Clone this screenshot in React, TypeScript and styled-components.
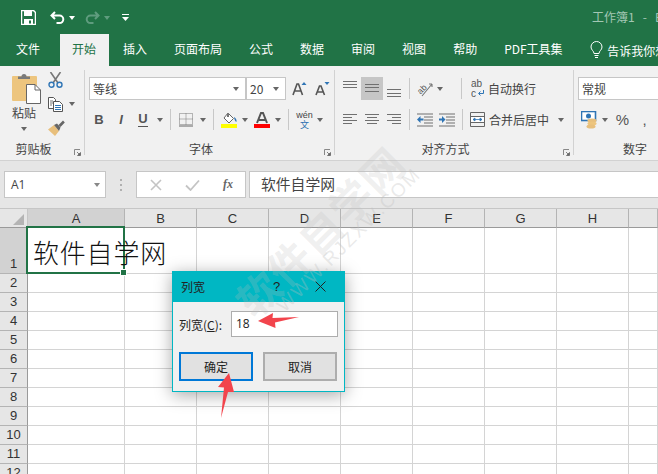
import React from "react";
import styled, { createGlobalStyle } from "styled-components";

const Global = createGlobalStyle`
  html, body { margin: 0; padding: 0; background: #fff; }
  body { font-family: "Noto Sans CJK SC", "Liberation Sans", sans-serif; font-size: 12px; color: #333; }
  * { box-sizing: border-box; }
  svg { display: block; }
`;

const Page = styled.div`
  position: relative; width: 658px; height: 474px; overflow: hidden;
  display: flex; flex-direction: column; background: #fff;
`;

/* title bar */
const TitleBar = styled.div`
  height: 33px; background: #217346; display: flex; align-items: center; flex: none;
  padding-top: 2px;
`;
const Slot = styled.div<{ $w: number; $ml?: number }>`
  width: ${p => p.$w}px; margin-left: ${p => p.$ml ?? 0}px; flex: none;
  display: flex; align-items: center; justify-content: center;
`;
const Caret = styled.i<{ $c?: string; $ml?: number }>`
  display: block; flex: none; width: 0; height: 0; margin-left: ${p => p.$ml ?? 0}px;
  border-left: 3.5px solid transparent; border-right: 3.5px solid transparent;
  border-top: 4px solid ${p => p.$c ?? "#666"};
`;
const DocTitle = styled.div`
  margin-left: 463px; color: #a3c7b4; font-size: 12px; white-space: pre; flex: none; margin-top: -2px;
`;

/* tabs */
const TabBar = styled.div`
  height: 33px; background: #217346; display: flex; flex: none; padding-left: 2.5px; padding-top: 1px;
`;
const Tab = styled.div<{ $active?: boolean }>`
  padding: 0 12.5px; margin: 0 1px; height: 32px; line-height: 30px; white-space: nowrap; font-size: 12px;
  color: ${p => (p.$active ? "#217346" : "#fff")};
  background: ${p => (p.$active ? "#f1f1f1" : "transparent")};
`;
const FileTab = styled(Tab)`
  margin-right: 6px;
`;
const TellMe = styled.div`
  margin-left: 14px; display: flex; align-items: center; gap: 4px; color: #fff; font-size: 12px;
  white-space: nowrap; height: 32px;
`;

/* ribbon */
const Ribbon = styled.div`
  height: 95px; background: #f1f1f1; border-bottom: 1px solid #d2d2d2; display: flex; flex: none; overflow: hidden;
`;
const Group = styled.div<{ $w: number }>`
  width: ${p => p.$w}px; flex: none; display: flex; flex-direction: column; position: relative;
`;
const GroupBody = styled.div`
  height: 74px; padding: 11px 0 0 4px;
`;
const GroupLabel = styled.div`
  height: 20px; padding-right: 17px; text-align: center; font-size: 12px; line-height: 18px; color: #444;
`;
const Launcher = styled.div`
  position: absolute; right: 3px; bottom: 4px; width: 7px; height: 7px;
`;
const GroupSep = styled.div`
  width: 1px; flex: none; margin: 4px 0 5px; background: #d2d2d2;
`;
const Row = styled.div`
  height: 23px; display: flex; align-items: center; & + & { margin-top: 8px; }
`;
const RowSep = styled.div<{ $ml: number }>`
  width: 1px; height: 21px; background: #c8c8c8; flex: none; margin-left: ${p => p.$ml}px;
`;
const ClipBody = styled.div`
  height: 74px; display: flex; padding-left: 12px;
`;
const PasteCol = styled.div`
  width: 24px; display: flex; flex-direction: column; align-items: flex-start; padding-top: 7px;
`;
const PasteLabel = styled.div`
  font-size: 12px; line-height: 18px; margin-top: 0; color: #444; white-space: nowrap;
`;
const PasteCaret = styled.div`
  width: 24px; display: flex; justify-content: center; margin-top: 5px;
`;
const ClipTools = styled.div`
  margin-left: 12px; padding-top: 6px; display: flex; flex-direction: column; gap: 8px;
`;
const ToolRow = styled.div`
  display: flex; align-items: center; height: 16px;
`;
const SelectBox = styled.div<{ $w: number; $ml?: number }>`
  width: ${p => p.$w}px; height: 23px; margin-left: ${p => p.$ml ?? 0}px; background: #fff; border: 1px solid #c6c6c6; flex: none;
  display: flex; align-items: center; justify-content: space-between; padding: 0 6px 0 3px;
  font-size: 12px; color: #444; white-space: nowrap;
`;
const BoldBtn = styled.span<{ $i?: boolean; $u?: boolean }>`
  font-family: "Liberation Sans", sans-serif; font-size: 13px; font-weight: 700; color: #555; line-height: 14px;
  font-style: ${p => (p.$i ? "italic" : "normal")};
  border-bottom: ${p => (p.$u ? "1px solid #555" : "none")};
`;
const AlignBtn = styled.div<{ $on?: boolean }>`
  width: 22px; height: 23px; flex: none; display: flex; justify-content: center;
  background: ${p => (p.$on ? "#c6c6c6" : "transparent")};
`;
const RowText = styled.div<{ $ml: number }>`
  margin-left: ${p => p.$ml}px; font-size: 12px; color: #444; white-space: nowrap; flex: none;
`;
const Wen = styled.div`
  display: flex; flex-direction: column; align-items: center; gap: 1px;
`;
const WenTop = styled.span`
  height: 8px; line-height: 8px; font-size: 9px; font-family: "Liberation Sans", sans-serif; color: #444;
`;
const WenBottom = styled.span`
  height: 9px; line-height: 9px; font-size: 9px; color: #2b6fb0;
`;
const Sym = styled.span<{ $s: number }>`
  font-family: "Liberation Sans", sans-serif; font-size: ${p => p.$s}px; color: #555; line-height: 1;
`;

/* formula bar */
const FormulaBar = styled.div`
  height: 48px; background: #e6e6e6; border-bottom: 1px solid #c6c6c6; flex: none; display: flex; align-items: center;
  padding: 0 0 0 4px;
`;
const NameBox = styled.div`
  width: 102px; height: 27px; background: #fff; border: 1px solid #c6c6c6; display: flex; align-items: center;
  justify-content: space-between; padding: 0 5px 0 6px; font-family: "Open Sans", sans-serif; font-size: 12px; color: #444;
`;
const Dots = styled.div`
  margin-left: 14px; width: 2px; display: flex; flex-direction: column; gap: 3px; flex: none;
  & i { display: block; width: 2px; height: 2px; background: #b0b0b0; }
`;
const FxBox = styled.div`
  margin-left: 14px; width: 110px; height: 27px; background: #fff; border: 1px solid #c6c6c6; flex: none;
  display: flex; align-items: center; padding-left: 13px; gap: 23px;
`;
const Fx = styled.span`
  font-family: "Liberation Serif", serif; font-style: italic; font-weight: 700; font-size: 12px; color: #666;
`;
const FormulaInput = styled.div`
  margin-left: 3px; flex: 1; height: 27px; background: #fff; border: 1px solid #c6c6c6; border-right: none;
  padding-left: 11px; font-size: 14.8px; line-height: 24px; color: #444; white-space: nowrap;
`;

/* sheet */
const Sheet = styled.div`
  flex: 1; display: grid; overflow: hidden;
  grid-template-columns: 28px 97px repeat(7, 72px) 1fr;
  grid-template-rows: 19px 46px repeat(11, 19px);
`;
const Corner = styled.div`
  background: #e6e6e6; border-right: 1px solid #c6c6c6; border-bottom: 1px solid #9a9a9a; position: relative;
  &::after { content: ""; position: absolute; right: 3px; bottom: 2px; width: 0; height: 0;
    border-left: 11px solid transparent; border-bottom: 11px solid #b4b4b4; }
`;
const ColHead = styled.div<{ $on?: boolean }>`
  background: ${p => (p.$on ? "#d2d2d2" : "#e6e6e6")};
  border-right: 1px solid #b4b4b4; border-bottom: 1px solid #9a9a9a;
  display: flex; justify-content: center; align-items: flex-end; padding-bottom: 0;
  font-family: "Liberation Sans", sans-serif; font-size: 13px; line-height: 16px; color: #333;
`;
const RowHead = styled.div<{ $on?: boolean }>`
  background: ${p => (p.$on ? "#d2d2d2" : "#e6e6e6")};
  border-right: 1px solid #9a9a9a; border-bottom: 1px solid #b4b4b4;
  display: flex; justify-content: center; align-items: flex-end;
  font-family: "Liberation Sans", sans-serif; font-size: 13px; line-height: 18px; color: #333;
`;
const Cell = styled.div`
  border-right: 1px solid #d4d4d4; border-bottom: 1px solid #d4d4d4; background: #fff;
`;
const ActiveCell = styled(Cell)`
  position: relative; z-index: 2; background: transparent;
`;
const CellText = styled.div`
  position: absolute; left: 5px; top: 7px; font-size: 26px; line-height: 34px; letter-spacing: .8px;
  font-weight: 300; color: #111; white-space: nowrap; z-index: 1;
`;
const Selection = styled.div`
  position: absolute; left: -2px; top: -2px; right: -1px; bottom: -1px; border: 2px solid #217346;
`;
const Handle = styled.div`
  position: absolute; right: -3px; bottom: -3px; width: 7px; height: 7px; background: #217346; border: 1px solid #fff;
`;

/* watermark */
const WmBig = styled.div`
  position: absolute; left: 319px; top: 230px; transform: translate(-50%, -50%) rotate(-45deg);
  font-size: 42px; letter-spacing: 1.5px; font-weight: 700; white-space: nowrap; color: rgba(190,190,190,.24);
  z-index: 4; pointer-events: none;
`;
const WmSmall = styled.div`
  position: absolute; left: 349px; top: 240px; transform: translate(-50%, -50%) rotate(-45deg);
  font-family: "Liberation Sans", sans-serif; font-size: 19px; letter-spacing: 1.7px; white-space: nowrap;
  color: rgba(190,190,190,.32); z-index: 4; pointer-events: none;
`;

/* dialog */
const Dialog = styled.div`
  position: absolute; left: 172px; top: 271px; width: 173px; height: 121px; background: #f0f0f0;
  border: 1px solid #00b7c3; box-shadow: 0 3px 16px rgba(0,0,0,.35); z-index: 3;
  display: flex; flex-direction: column;
`;
const DialogTitle = styled.div`
  height: 30px; background: #00b7c3; display: flex; align-items: center; padding: 0 0 2px 8px; font-size: 12px; color: #222; flex: none;
`;
const HelpMark = styled.span`
  margin-left: 68px; font-size: 13px; width: 8px; font-family: "Liberation Sans", sans-serif;
`;
const DialogClose = styled.div`
  margin-left: 34px;
`;
const DialogBody = styled.div`
  flex: 1; padding: 9px 6px 0 6px; display: flex; flex-direction: column;
`;
const FieldRow = styled.div`
  display: flex; align-items: center; height: 26px;
`;
const FieldLabel = styled.label`
  width: 52px; font-size: 12px; color: #222; white-space: nowrap; flex: none;
  & u { text-underline-offset: 1px; }
`;
const FieldInput = styled.div`
  width: 107px; height: 26px; background: #fff; border: 1px solid #adadad; padding-left: 4px;
  font-family: "Open Sans", sans-serif; font-size: 12px; line-height: 24px; color: #222;
`;
const ButtonRow = styled.div`
  display: flex; margin-top: 15px; gap: 10px;
`;
const DlgButton = styled.div<{ $primary?: boolean }>`
  width: 74px; height: 29px; background: #e1e1e1; display: flex; align-items: center; justify-content: center;
  font-size: 12px; color: #222; border: 2px solid ${p => (p.$primary ? "#0078d7" : "#adadad")};
`;
const Arrow = styled.svg<{ $x: number; $y: number }>`
  position: absolute; left: ${p => p.$x}px; top: ${p => p.$y}px; z-index: 5;
`;

/* icons */
const Save = () => (
  <svg width="15" height="15" viewBox="0 0 15 15">
    <path d="M.5.5h12l2 2v12H.5z" fill="none" stroke="#fff" strokeWidth="1.5" />
    <rect x="3" y="1" width="8" height="5" fill="#fff" />
    <rect x="3" y="9" width="9" height="5.5" fill="#fff" />
    <rect x="8" y="10.5" width="2" height="3" fill="#217346" />
  </svg>
);
const Undo = ({ c, flip }: { c: string; flip?: boolean }) => (
  <svg width="15" height="14" viewBox="0 0 15 14" style={flip ? { transform: "scaleX(-1)" } : undefined}>
    <path d="M5 1 1.5 4.5 5 8M1.5 4.5H9.5a3.8 3.8 0 0 1 0 7.6H6.5" fill="none" stroke={c} strokeWidth="2" />
  </svg>
);
const Customize = () => (
  <svg width="7" height="7" viewBox="0 0 7 7">
    <rect y="0" width="7" height="1" fill="#fff" />
    <path d="M0 3h7L3.5 7z" fill="#fff" />
  </svg>
);
const Bulb = () => (
  <svg width="13" height="18" viewBox="0 0 13 18">
    <path d="M4 12.5C4 10 1 9 1 6a5.5 5.5 0 0 1 11 0c0 3-3 4-3 6.5zM4.5 14.5h4M5 16.5h3" fill="none" stroke="#fff" strokeWidth="1" />
  </svg>
);
const LaunchIcon = () => (
  <svg width="7" height="7" viewBox="0 0 7 7">
    <path d="M.5 6V.5H6" fill="none" stroke="#888" />
    <path d="M3 3l3 3M6.5 3.5v3h-3z" fill="#666" stroke="#666" strokeWidth=".8" />
  </svg>
);
const Paste = () => (
  <svg width="29" height="31" viewBox="0 0 29 31">
    <path d="M1 3h23a1 1 0 0 1 1 1v23a1 1 0 0 1-1 1H1a1 1 0 0 1-1-1V4a1 1 0 0 1 1-1z" fill="#edc57e" />
    <path d="M6 6V3.5h3.5a2.5 2.5 0 0 1 5 0H18V6z" fill="#7a7a7a" />
    <path d="M14.500 11.500h8.500l5.500 5.500v13.500h-14z" fill="#fff" stroke="#666" />
    <path d="M23 11.500v5.500h5.500" fill="none" stroke="#666" />
  </svg>
);
const Cut = () => (
  <svg width="15" height="16" viewBox="0 0 15 16">
    <path d="M2.500 0 10 11M12.500 0 5 11" stroke="#777" strokeWidth="1.600" fill="none" />
    <circle cx="3.500" cy="12.800" r="2.500" fill="none" stroke="#2f75b5" strokeWidth="1.400" />
    <circle cx="11.500" cy="12.800" r="2.500" fill="none" stroke="#2f75b5" strokeWidth="1.400" />
  </svg>
);
const Copy = () => (
  <svg width="15" height="15" viewBox="0 0 15 15">
    <path d="M.5.500h5l2 2v9H.5z" fill="#fff" stroke="#555" />
    <path d="M5.500 4.500h6l3 3v7h-9z" fill="#fff" stroke="#555" />
    <path d="M7 8.500h6M7 10.500h6M7 12.500h6" stroke="#2f75b5" />
    <path d="M2 4h3M2 6h3M2 8h2" stroke="#777" />
  </svg>
);
const Painter = () => (
  <svg width="17" height="16" viewBox="0 0 17 16">
    <path d="M0 9.500 6 5l5 6-4 5z" fill="#e8bf7c" />
    <path d="M6 5l3-1.500 3.500 4L11 11zM10.500 5 15 .5 16.800 2.500 12.500 7z" fill="#666" />
  </svg>
);
const Borders = () => (
  <svg width="14" height="14" viewBox="0 0 14 14">
    <path d="M.5.500h13v11H.5zM7 .5v11M.5 6h13" fill="none" stroke="#777" strokeDasharray="1 1" />
    <rect y="12.500" width="14" height="1" fill="#666" />
  </svg>
);
const FillIcon = () => (
  <svg width="16" height="16" viewBox="0 0 16 16">
    <path d="M7 1l5.500 5.500L8 11 3 6z" fill="#fff" stroke="#666" />
    <path d="M6 1h2v4H6z" fill="#777" />
    <path d="M13 5c2 1 3 3 2.400 5-1-.5-2-2-2.400-5z" fill="#2f75b5" />
    <rect y="12" width="16" height="4" fill="#ffff00" />
  </svg>
);
const ColorIcon = () => (
  <svg width="16" height="16" viewBox="0 0 16 16">
    <path d="M3 11 7 1h2l4 10M5 8h6" fill="none" stroke="#555" strokeWidth="2" />
    <rect y="12" width="16" height="4" fill="#ff0000" />
  </svg>
);
const Grow = ({ up }: { up?: boolean }) => (
  <svg width="15" height="15" viewBox="0 0 15 15">
    <path d={up ? "M1 14 5 3h1.500l4 11M2.800 10h5.800" : "M1 14 4.500 5h1.500L9.500 14M2.500 11h5.500"} fill="none" stroke="#555" strokeWidth="1.600" />
    <path d={up ? "M9.500 4 12 1l2.500 3z" : "M9.500 1h5L12 4z"} fill="#2f75b5" />
  </svg>
);
const Lines = ({ ys, xs }: { ys: number[]; xs: [number, number][] }) => (
  <svg width="14" height="23" viewBox="0 0 14 23">
    {ys.map((y, i) => {
      const [a, b] = xs[i % xs.length];
      return <rect key={y} x={a} y={y} width={b - a} height="1" fill="#707070" />;
    })}
  </svg>
);
const Orient = () => (
  <svg width="16" height="16" viewBox="0 0 16 16">
    <path d="M5 15 15 3M15 3h-3M15 3v3" fill="none" stroke="#777" strokeWidth="1.100" />
    <text x="0" y="11" fontFamily="Liberation Sans" fontSize="8.500" fill="#555" transform="rotate(-45 5 8)">ab</text>
  </svg>
);
const Indent = ({ out }: { out?: boolean }) => (
  <svg width="16" height="14" viewBox="0 0 16 14">
    {[0.5, 3.5, 6.5, 9.5, 12.5].map(y => (
      <rect key={y} x={(y === 0.5 || y === 12.5) ? 0 : 7} y={y} width={(y === 0.5 || y === 12.5) ? 16 : 9} height="1" fill="#707070" />
    ))}
    <path d={out ? "M0 6.500 3.500 3v2.500H6.500v2H3.500V10z" : "M6.500 6.500 3 3v2.500H0v2h3V10z"} fill="#2f75b5" />
  </svg>
);
const Merge = () => (
  <svg width="15" height="15" viewBox="0 0 15 15">
    <path d="M.5.500h14v14H.5zM.5 4.500h14M.5 10.500h14" fill="none" stroke="#666" />
    <rect x="1" y="5" width="13" height="5" fill="#fff" />
    <path d="M3 7.500h9M3 7.500l2-1.500v3zM12 7.500l-2-1.500v3z" fill="#2f75b5" stroke="#2f75b5" strokeWidth=".8" />
  </svg>
);
const WrapIcon = () => (
  <svg width="14" height="20" viewBox="0 0 14 20">
    <text x="0" y="8" fontFamily="Liberation Sans" fontSize="10" fill="#555">ab</text>
    <text x="0" y="18" fontFamily="Liberation Sans" fontSize="10" fill="#555">c</text>
    <path d="M12.500 11v3.500H8M9.500 12.500l-2 2 2 2" fill="none" stroke="#2f75b5" />
  </svg>
);
const Currency = () => (
  <svg width="17" height="18" viewBox="0 0 17 18">
    <rect x=".5" y=".5" width="14" height="9" fill="#fff" stroke="#2f75b5" strokeWidth="1.600" />
    <circle cx="7.500" cy="5" r="2.500" fill="#2f75b5" />
    <ellipse cx="11" cy="9.500" rx="4.500" ry="2" fill="#e8bf7c" />
    <ellipse cx="11" cy="12.500" rx="4.500" ry="2" fill="#edc57e" />
    <ellipse cx="10" cy="15.500" rx="4.500" ry="2" fill="#e8bf7c" />
  </svg>
);
const XMark = () => (
  <svg width="12" height="12" viewBox="0 0 12 12">
    <path d="M1 1l10 10M11 1 1 11" stroke="#c4c4c4" strokeWidth="1.600" />
  </svg>
);
const Check = () => (
  <svg width="15" height="12" viewBox="0 0 15 12">
    <path d="M1 6.500 5.500 11 14 1.500" fill="none" stroke="#c4c4c4" strokeWidth="1.800" />
  </svg>
);
const CloseX = () => (
  <svg width="11" height="11" viewBox="0 0 11 11">
    <path d="M.5.500l10 10M10.500.500l-10 10" stroke="#222" strokeWidth="1" />
  </svg>
);

const TABS = ["开始", "插入", "页面布局", "公式", "数据", "审阅", "视图", "帮助", "PDF工具集"];
const COLS = ["B", "C", "D", "E", "F", "G", "H", ""];
const ROWS = [2, 3, 4, 5, 6, 7, 8, 9, 10, 11, 12];

export default function App() {
  return (
    <Page>
      <Global />
      <TitleBar>
        <Slot $w={15} $ml={21}><Save /></Slot>
        <Slot $w={15} $ml={14}><Undo c="#fff" /></Slot>
        <Caret $c="#fff" $ml={4} />
        <Slot $w={15} $ml={10}><Undo c="#5f9c7e" flip /></Slot>
        <Caret $c="#5f9c7e" $ml={4} />
        <Slot $w={7} $ml={12}><Customize /></Slot>
        <DocTitle>工作簿1   -   Excel</DocTitle>
      </TitleBar>
      <TabBar>
        <FileTab>文件</FileTab>
        {TABS.map((t, i) => <Tab key={t} $active={i === 0}>{t}</Tab>)}
        <TellMe><Bulb />告诉我你想要做什么</TellMe>
      </TabBar>
      <Ribbon>
        <Group $w={84}>
          <ClipBody>
            <PasteCol>
              <Paste />
              <PasteLabel>粘贴</PasteLabel>
              <PasteCaret><Caret /></PasteCaret>
            </PasteCol>
            <ClipTools>
              <ToolRow><Slot $w={15}><Cut /></Slot></ToolRow>
              <ToolRow><Slot $w={15}><Copy /></Slot><Caret $ml={6} /></ToolRow>
              <ToolRow><Slot $w={17}><Painter /></Slot></ToolRow>
            </ClipTools>
          </ClipBody>
          <GroupLabel>剪贴板</GroupLabel>
          <Launcher><LaunchIcon /></Launcher>
        </Group>
        <GroupSep />
        <Group $w={249}>
          <GroupBody>
            <Row>
              <SelectBox $w={157}>等线<Caret /></SelectBox>
              <SelectBox $w={40}><span>20</span><Caret /></SelectBox>
              <Slot $w={15} $ml={6}><Grow up /></Slot>
              <Slot $w={15} $ml={8}><Grow /></Slot>
            </Row>
            <Row>
              <Slot $w={20}><BoldBtn>B</BoldBtn></Slot>
              <Slot $w={20} $ml={2}><BoldBtn $i>I</BoldBtn></Slot>
              <Slot $w={20} $ml={2}><BoldBtn $u>U</BoldBtn></Slot>
              <Caret $ml={4} />
              <RowSep $ml={7} />
              <Slot $w={14} $ml={8}><Borders /></Slot>
              <Caret $ml={7} />
              <RowSep $ml={7} />
              <Slot $w={16} $ml={7}><FillIcon /></Slot>
              <Caret $ml={5} />
              <Slot $w={16} $ml={6}><ColorIcon /></Slot>
              <Caret $ml={5} />
              <RowSep $ml={7} />
              <Slot $w={15} $ml={8}><Wen><WenTop>wén</WenTop><WenBottom>文</WenBottom></Wen></Slot>
              <Caret $ml={5} />
            </Row>
          </GroupBody>
          <GroupLabel>字体</GroupLabel>
          <Launcher><LaunchIcon /></Launcher>
        </Group>
        <GroupSep />
        <Group $w={238}>
          <GroupBody>
            <Row>
              <AlignBtn><Lines ys={[4, 7, 10]} xs={[[0, 14]]} /></AlignBtn>
              <AlignBtn $on><Lines ys={[7, 10, 14]} xs={[[0, 14]]} /></AlignBtn>
              <AlignBtn><Lines ys={[12, 16, 19]} xs={[[0, 14]]} /></AlignBtn>
              <RowSep $ml={4} />
              <Slot $w={16} $ml={7}><Orient /></Slot>
              <Caret $ml={4} />
              <RowSep $ml={18} />
              <Slot $w={14} $ml={9}><WrapIcon /></Slot>
              <RowText $ml={3}>自动换行</RowText>
            </Row>
            <Row>
              <AlignBtn><Lines ys={[6, 9, 12, 15]} xs={[[0, 14], [0, 9]]} /></AlignBtn>
              <AlignBtn><Lines ys={[6, 9, 12, 15]} xs={[[0, 14], [2, 12]]} /></AlignBtn>
              <AlignBtn><Lines ys={[6, 9, 12, 15]} xs={[[0, 14], [5, 14]]} /></AlignBtn>
              <RowSep $ml={4} />
              <Slot $w={16} $ml={7}><Indent out /></Slot>
              <Slot $w={16} $ml={6}><Indent /></Slot>
              <RowSep $ml={7} />
              <Slot $w={15} $ml={7}><Merge /></Slot>
              <RowText $ml={4}>合并后居中</RowText>
              <Caret $ml={9} />
            </Row>
          </GroupBody>
          <GroupLabel>对齐方式</GroupLabel>
          <Launcher><LaunchIcon /></Launcher>
        </Group>
        <GroupSep />
        <Group $w={139}>
          <GroupBody>
            <Row><SelectBox $w={135}>常规</SelectBox></Row>
            <Row>
              <Slot $w={17} $ml={3}><Currency /></Slot>
              <Caret $ml={4} />
              <Slot $w={13} $ml={8}><Sym $s={15}>%</Sym></Slot>
              <Slot $w={5} $ml={13}><Sym $s={15}>,</Sym></Slot>
            </Row>
          </GroupBody>
          <GroupLabel>数字</GroupLabel>
        </Group>
      </Ribbon>
      <FormulaBar>
        <NameBox>A1<Caret $c="#888" /></NameBox>
        <Dots><i /><i /><i /></Dots>
        <FxBox><XMark /><Check /><Fx>fx</Fx></FxBox>
        <FormulaInput>软件自学网</FormulaInput>
      </FormulaBar>
      <Sheet>
        <Corner />
        <ColHead $on>A</ColHead>
        {COLS.map((c, i) => <ColHead key={i}>{c}</ColHead>)}
        <RowHead $on>1</RowHead>
        <ActiveCell>
          <CellText>软件自学网</CellText>
          <Selection />
          <Handle />
        </ActiveCell>
        {COLS.map((_, i) => <Cell key={i} />)}
        {ROWS.map(r => (
          <React.Fragment key={r}>
            <RowHead>{r}</RowHead>
            <Cell />
            {COLS.map((_, i) => <Cell key={i} />)}
          </React.Fragment>
        ))}
      </Sheet>
      <Dialog>
        <DialogTitle>
          列宽
          <HelpMark>?</HelpMark>
          <DialogClose><CloseX /></DialogClose>
        </DialogTitle>
        <DialogBody>
          <FieldRow>
            <FieldLabel>列宽(<u>C</u>):</FieldLabel>
            <FieldInput>18</FieldInput>
          </FieldRow>
          <ButtonRow>
            <DlgButton $primary>确定</DlgButton>
            <DlgButton>取消</DlgButton>
          </ButtonRow>
        </DialogBody>
      </Dialog>
      <WmBig>软件自学网</WmBig>
      <WmSmall>WWW.RJZXW.COM</WmSmall>
      <Arrow $x={256} $y={311} width="45" height="19" viewBox="256 311 45 19">
        <path d="M258 321 273 313 272.500 318 299 317 275 322.500 275.500 328z" fill="#f2444c" />
      </Arrow>
      <Arrow $x={216} $y={371} width="20" height="48" viewBox="216 371 20 48">
        <path d="M229 373 218 387 224 387.500 221 418 228 392 234 392z" fill="#f2444c" />
      </Arrow>
    </Page>
  );
}
